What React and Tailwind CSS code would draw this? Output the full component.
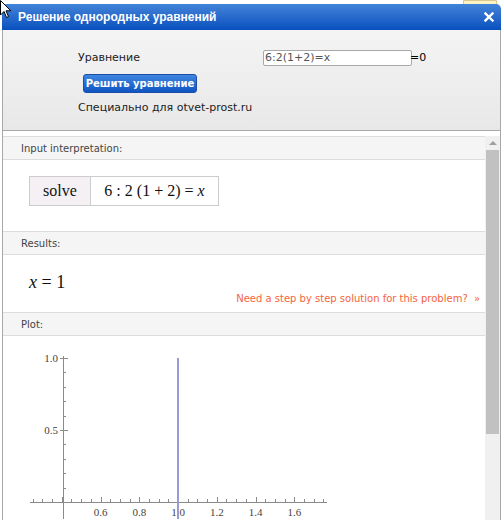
import React from "react";

const xTicks = [];
for (let i = 0; i <= 30; i++) xTicks.push(0.25 + i * 0.05);
const yTicks = [0.1, 0.2, 0.3, 0.4, 0.5, 0.6, 0.7, 0.8, 0.9, 1.0];

// plot space: svg origin sits at page (3, 337)
const px = (v) => 175 + (v - 1) * 193.75;
const py = (v) => 166 - v * 144;

const Plot = () => (
  <svg width="330" height="183" className="block">
    <line x1="27" y1="166.5" x2="324" y2="166.5" stroke="#8a8a8a" strokeWidth="1" />
    <line x1="60.5" y1="20" x2="60.5" y2="183" stroke="#8a8a8a" strokeWidth="1" />
    {xTicks.map((v, i) => {
      const x = Math.round(px(v)) + 0.5;
      const major = i % 4 === 3;
      return (
        <line key={i} x1={x} y1={166} x2={x} y2={major ? 161 : 163} stroke="#8a8a8a" strokeWidth="1" />
      );
    })}
    {yTicks.map((v, i) => {
      const y = Math.round(py(v)) + 0.5;
      const major = v === 0.5 || v === 1.0;
      return (
        <line key={i} x1={major ? 57 : 61} y1={y} x2={major ? 65 : 63} y2={y} stroke="#8a8a8a" strokeWidth="1" />
      );
    })}
    {[0.6, 0.8, 1.0, 1.2, 1.4, 1.6].map((v) => (
      <text key={v} x={px(v)} y="180" textAnchor="middle" fontSize="11" fill="#444" fontFamily="'Liberation Serif', serif">
        {v.toFixed(1)}
      </text>
    ))}
    {[0.5, 1.0].map((v) => (
      <text key={v} x="55" y={py(v) + 4} textAnchor="end" fontSize="11" fill="#444" fontFamily="'Liberation Serif', serif">
        {v.toFixed(1)}
      </text>
    ))}
    <line x1="175" y1="22" x2="175" y2="183" stroke="#9a9ad6" strokeWidth="2" />
  </svg>
);

const SectionHeader = ({ children }) => (
  <div className="h-[24px] flex items-center pl-[18px] bg-[#f5f5f5] border-y border-[#dcdcdc] text-[10px] text-[#444]">
    {children}
  </div>
);

export default function App() {
  return (
    <div className="relative w-[503px] h-[520px] overflow-hidden bg-white font-['DejaVu_Sans',sans-serif]">
      {/* tooltip peeking from behind the window */}
      <div className="absolute right-[6px] top-0 w-[34px] h-[8px] rounded-b-[4px] bg-[#fbf3c6] border border-[#d8c98a]" />

      <div className="relative mt-[4px] ml-[2px] w-[499px] flex flex-col">
        <div className="h-[26px] rounded-t-[5px] bg-gradient-to-b from-[#4283d8] to-[#0650bf] flex items-center justify-between pl-[16px] pr-[7px]">
          <span className="text-white font-bold text-[12px] font-['Liberation_Sans',sans-serif]">Решение однородных уравнений</span>
          <svg width="10" height="10" viewBox="0 0 10 10">
            <path d="M1.5 1.5 L8.5 8.5 M8.5 1.5 L1.5 8.5" stroke="#fff" strokeWidth="2.4" strokeLinecap="square" />
          </svg>
        </div>

        <div className="border-x border-[#a8a8a8] bg-gradient-to-b from-[#f4f4f4] to-[#e8e8e8] h-[101px] border-b pt-[20px] pl-[75px] text-[11px] text-[#222]">
          <div className="flex items-center h-[16px]">
            <span className="w-[185px]">Уравнение</span>
            <div className="w-[149px] h-[16px] bg-white border border-[#a8a8a8] rounded-[2px] flex items-center px-[1px] text-[#555]">
              6:2(1+2)=x
            </div>
            <span className="-ml-[2px] text-black">=0</span>
          </div>
          <button className="mt-[8px] ml-[5px] w-[114px] h-[19px] rounded-[3px] border border-[#1b4fa8] bg-gradient-to-b from-[#3f86e0] to-[#0d55c4] text-white font-bold text-[10px] flex items-center justify-center">
            Решить уравнение
          </button>
          <div className="mt-[7px]">Специально для otvet-prost.ru</div>
        </div>

        <div className="flex border-x border-[#a8a8a8] bg-white pt-[5px] h-[389px]">
          <div className="flex-1 flex flex-col">
            <SectionHeader>Input interpretation:</SectionHeader>
            <div className="h-[71px] pt-[16px] pl-[26px]">
              <div className="inline-flex h-[30px] border border-[#cccccc] font-['Liberation_Serif',serif] text-[16px] text-[#111]">
                <div className="w-[61px] flex items-center justify-center bg-[#f4f0f4] border-r border-[#cccccc]">solve</div>
                <div className="w-[127px] flex items-center justify-center">
                  6 : 2 (1 + 2) = <i className="ml-[4px]">x</i>
                </div>
              </div>
            </div>
            <SectionHeader>Results:</SectionHeader>
            <div className="h-[57px] pl-[26px] pt-[14px] relative">
              <div className="font-['Liberation_Serif',serif] text-[18px] text-[#111]">
                <i>x</i> = 1
              </div>
              <div className="absolute right-[5px] bottom-[6px] text-[10px] text-[#f5643c]">
                Need a step by step solution for this problem? <span className="ml-[3px]">»</span>
              </div>
            </div>
            <SectionHeader>Plot:</SectionHeader>
            <Plot />
          </div>
          <div className="w-[15px] bg-[#f0f0f0] flex flex-col items-center">
            <div className="mt-[5px] w-0 h-0 border-x-[4px] border-x-transparent border-b-[4px] border-b-[#a0a0a0]" />
            <div className="mt-[5px] w-[13px] h-[284px] bg-[#c1c1c1]" />
          </div>
        </div>
      </div>

      {/* mouse pointer */}
      <svg className="absolute left-0 top-0" width="12" height="19" viewBox="0 0 12 19">
        <path d="M0.5 0.5 L0.5 15 L4 11.5 L6.5 17.5 L8.5 16.5 L6 10.8 L10.8 10.8 Z" fill="#fff" stroke="#000" strokeWidth="1" />
      </svg>
    </div>
  );
}
